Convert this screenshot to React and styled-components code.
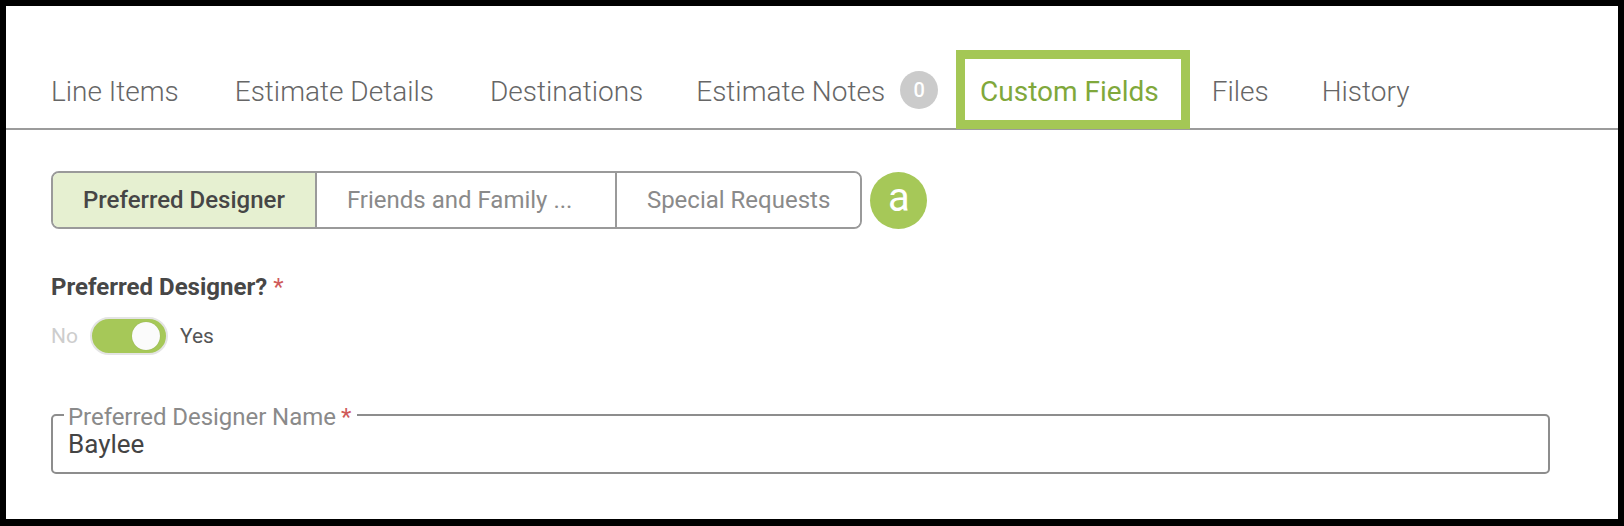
import React from "react";
import styled, { createGlobalStyle } from "styled-components";

const Global = createGlobalStyle`
  html, body { margin: 0; padding: 0; background: #000; }
  body { font-family: Roboto, "Liberation Sans", Arial, sans-serif; }
  * { box-sizing: border-box; }
`;

const Frame = styled.div`
  width: 1624px;
  height: 526px;
  background: #000;
  padding: 6px 6px 7px 6px;
`;

const Page = styled.div`
  background: #fff;
  height: 100%;
  padding-top: 44px;
`;

const TabBar = styled.nav`
  display: flex;
  align-items: stretch;
  height: 80px;
  padding-left: 17px;
  border-bottom: 2px solid #9b9b9b;
`;

const Tab = styled.div`
  display: flex;
  align-items: center;
  gap: 15px;
  padding: 4px ${(p) => p.$pr ?? 28}px 0 ${(p) => p.$pl ?? 28}px;
  height: ${(p) => (p.$active ? "79px" : "78px")};
  font-size: 28px;
  font-weight: ${(p) => (p.$active ? 400 : 300)};
  color: ${(p) => (p.$active ? "#80a83b" : "#666")};
  box-shadow: ${(p) => (p.$active ? "inset 0 0 0 9px #a4c755" : "none")};
  white-space: nowrap;
`;

const Count = styled.span`
  display: inline-flex;
  align-items: center;
  justify-content: center;
  width: 38px;
  height: 38px;
  border-radius: 50%;
  background: #cbcbcb;
  color: #fff;
  font-size: 20px;
  font-weight: 500;
  margin-top: -2px;
`;

const Content = styled.div`
  padding: 41px 68px 0 45px;
`;

const SegRow = styled.div`
  display: flex;
  align-items: center;
  gap: 8px;
`;

const Segmented = styled.div`
  display: flex;
  height: 58px;
  border: 2px solid #9a9a9a;
  border-radius: 8px;
  overflow: hidden;
`;

const Segment = styled.div`
  display: flex;
  align-items: center;
  justify-content: ${(p) => (p.$w ? "flex-start" : "center")};
  width: ${(p) => (p.$w ? `${p.$w}px` : "auto")};
  padding: 0 30px;
  font-size: 24px;
  font-weight: ${(p) => (p.$active ? 500 : 400)};
  color: ${(p) => (p.$active ? "#464646" : "#8a8a8a")};
  background: ${(p) => (p.$active ? "#e6f0d1" : "#fff")};
  white-space: nowrap;
  & + & { border-left: 2px solid #9a9a9a; }
`;

const Marker = styled.div`
  width: 57px;
  height: 57px;
  border-radius: 50%;
  background: #a6c858;
  color: #fff;
  display: flex;
  align-items: center;
  justify-content: center;
  font-size: 40px;
  font-weight: 400;
  line-height: 1;
  padding-bottom: 5px;
`;

const FieldLabel = styled.div`
  margin-top: 44px;
  font-size: 24px;
  line-height: 28px;
  font-weight: 700;
  color: #474747;
`;

const Req = styled.span`
  color: #cf5a5a;
  font-weight: 400;
  margin-left: ${(p) => p.$gap ?? 6}px;
`;

const SwitchRow = styled.div`
  display: flex;
  align-items: center;
  gap: 12px;
  margin-top: 16px;
  font-size: 21px;
`;

const SwitchText = styled.span`
  color: ${(p) => (p.$on ? "#555" : "#cdcdcd")};
`;

const Track = styled.div`
  width: 78px;
  height: 38px;
  border-radius: 19px;
  background: #a6c858;
  border: 2px solid #e4e4e4;
  display: flex;
  align-items: center;
  justify-content: flex-end;
  padding-right: 6px;
`;

const Knob = styled.div`
  width: 28px;
  height: 28px;
  border-radius: 50%;
  background: #fbfbfb;
  box-shadow: 0 0 1px rgba(0, 0, 0, 0.2);
`;

const Field = styled.fieldset`
  margin: 46px 0 0 0;
  padding: 0 15px 13px 15px;
  border: 2px solid #8d8d8d;
  border-radius: 5px;
  min-width: 0;
`;

const Legend = styled.legend`
  margin-left: -4px;
  padding: 4px 6px 0 4px;
  font-size: 24px;
  line-height: 24px;
  color: #8a8a8a;
  letter-spacing: -0.05px;
`;

const Value = styled.div`
  font-size: 26px;
  line-height: 30px;
  color: #444;
`;

const tabs = ["Line Items", "Estimate Details", "Destinations", "Estimate Notes", "Custom Fields", "Files", "History"];

const pads = {
  "Estimate Notes": { pl: 25, pr: 18 },
  "Custom Fields": { pl: 24, pr: 31 },
  Files: { pl: 22 },
  History: { pl: 25 },
};

export default function App() {
  return (
    <>
      <Global />
      <Frame>
        <Page>
          <TabBar>
            {tabs.map((t) => (
              <Tab key={t} $active={t === "Custom Fields"} $pr={pads[t]?.pr} $pl={pads[t]?.pl}>
                {t}
                {t === "Estimate Notes" && <Count>0</Count>}
              </Tab>
            ))}
          </TabBar>
          <Content>
            <SegRow>
              <Segmented>
                <Segment $active>Preferred Designer</Segment>
                <Segment $w={300}>Friends and Family ...</Segment>
                <Segment>Special Requests</Segment>
              </Segmented>
              <Marker>a</Marker>
            </SegRow>
            <FieldLabel>
              Preferred Designer?<Req>*</Req>
            </FieldLabel>
            <SwitchRow>
              <SwitchText>No</SwitchText>
              <Track>
                <Knob />
              </Track>
              <SwitchText $on>Yes</SwitchText>
            </SwitchRow>
            <Field>
              <Legend>
                Preferred Designer Name<Req $gap={5}>*</Req>
              </Legend>
              <Value>Baylee</Value>
            </Field>
          </Content>
        </Page>
      </Frame>
    </>
  );
}
